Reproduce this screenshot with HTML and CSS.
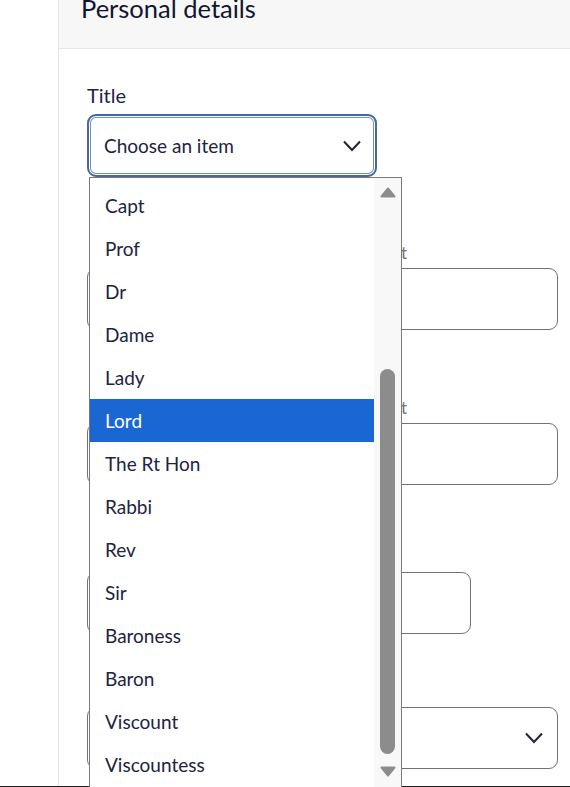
FILE: index.html
```html
<!DOCTYPE html>
<html lang="en">
<head>
<meta charset="utf-8">
<title>Personal details</title>
<link rel="stylesheet" href="styles.css">
</head>
<body>
<div class="page">
  <div class="gutter"></div>
  <section class="panel">
    <header class="panel-head">
      <h2 class="panel-title">Personal details</h2>
    </header>
    <div class="panel-body">
      <div class="field field-title">
        <label class="label">Title</label>
        <div class="select-wrap">
          <div class="select select-focused">
            <span class="select-value">Choose an item</span>
            <svg class="chev" width="18" height="12" viewBox="0 0 18 12"><path d="M1 1.5 L9 10 L17 1.5" fill="none" stroke="#1d2340" stroke-width="2"/></svg>
          </div>
          <div class="dropdown">
            <ul class="options">
              <li class="option">Capt</li>
              <li class="option">Prof</li>
              <li class="option">Dr</li>
              <li class="option">Dame</li>
              <li class="option">Lady</li>
              <li class="option option-active">Lord</li>
              <li class="option">The Rt Hon</li>
              <li class="option">Rabbi</li>
              <li class="option">Rev</li>
              <li class="option">Sir</li>
              <li class="option">Baroness</li>
              <li class="option">Baron</li>
              <li class="option">Viscount</li>
              <li class="option">Viscountess</li>
            </ul>
            <div class="scrollbar">
              <svg class="arrow arrow-up" width="16" height="11" viewBox="0 0 16 11"><polygon points="8,1.5 14.5,9.5 1.5,9.5" fill="#8c8c8c" stroke="#8c8c8c" stroke-width="2" stroke-linejoin="round"/></svg>
              <div class="thumb"></div>
              <svg class="arrow arrow-down" width="16" height="11" viewBox="0 0 16 11"><polygon points="1.5,1.5 14.5,1.5 8,9.5" fill="#8c8c8c" stroke="#8c8c8c" stroke-width="2" stroke-linejoin="round"/></svg>
            </div>
          </div>
        </div>
      </div>
      <div class="field field-2">
        <label class="label label-hint label-hint-long">First name(s) as shown on your passport</label>
        <div class="input"></div>
      </div>
      <div class="field field-3">
        <label class="label label-hint label-hint-long">Last name(s) as shown on your passport</label>
        <div class="input"></div>
      </div>
      <div class="field field-4">
        <label class="label label-hint">Date of birth</label>
        <div class="input input-short"></div>
      </div>
      <div class="field field-5">
        <label class="label label-hint">Nationality</label>
        <div class="select">
          <span class="select-value"></span>
          <svg class="chev" width="18" height="12" viewBox="0 0 18 12"><path d="M1 1.5 L9 10 L17 1.5" fill="none" stroke="#1d2340" stroke-width="2"/></svg>
        </div>
      </div>
    </div>
  </section>
</div>
</body>
</html>
```

FILE: styles.css
```css
* { box-sizing: border-box; }

html, body {
  margin: 0;
  padding: 0;
  background: #ffffff;
}

body {
  font-family: Lato, "Open Sans", "Liberation Sans", sans-serif;
  color: #1d2340;
  height: 787px;
  overflow: hidden;
}

.page {
  display: flex;
  height: 787px;
  border-bottom: 1px solid #1f1f1f;
}

.gutter {
  width: 58px;
  flex: none;
}

.panel {
  flex: 1;
  border-left: 1px solid #e4e4e4;
  display: flex;
  flex-direction: column;
  min-width: 0;
}

.panel-head {
  height: 49px;
  background: #f7f7f7;
  border-bottom: 1px solid #e6e6e6;
  padding-left: 22px;
  overflow: hidden;
  flex: none;
}

.panel-title {
  margin: -8px 0 0 0;
  font-size: 25.5px;
  line-height: 32px;
  font-weight: 400;
  color: #111530;
}

.panel-body {
  padding: 34px 12px 0 28px;
  display: flex;
  flex-direction: column;
}

.field {
  display: flex;
  flex-direction: column;
}

.label {
  font-size: 20px;
  line-height: 24px;
  margin-bottom: 7px;
  color: #1d2340;
}

.label-hint {
  font-size: 17px;
  line-height: 22px;
  margin-bottom: 4px;
  padding-left: 3px;
  color: #6e7282;
  white-space: nowrap;
}

.label-hint-long {
  width: 320px;
  padding-left: 0;
  text-align: right;
  overflow: hidden;
}

.field-2 { margin-top: 65px; }
.field-3 { margin-top: 67px; }
.field-4 { margin-top: 61px; }
.field-5 { margin-top: 47px; }

.select-wrap {
  position: relative;
  width: 290px;
}

.select {
  height: 62px;
  border: 1px solid #6e7180;
  border-radius: 9px;
  display: flex;
  align-items: center;
  justify-content: space-between;
  padding: 0 14px 0 16px;
  background: #fff;
}

.select-focused {
  height: 63px;
  border: 2px solid #46699b;
  box-shadow: inset 0 0 0 1px #ffffff, inset 0 0 0 2px #7391bd;
  padding: 0 14px 0 15px;
}

.select-value {
  font-size: 19px;
  color: #1d2340;
}

.chev { display: block; }

.input {
  height: 62px;
  border: 1px solid #6e7180;
  border-radius: 9px;
  background: #fff;
}

.input-short {
  width: 384px;
}

.dropdown {
  position: absolute;
  top: 100%;
  left: 2px;
  width: 313px;
  height: 640px;
  border: 1px solid #7a7a7a;
  background: #ffffff;
  display: flex;
  z-index: 5;
}

.options {
  list-style: none;
  margin: 0;
  padding: 6px 0 0 0;
  width: 284px;
  flex: none;
}

.option {
  height: 43px;
  line-height: 44px;
  padding-left: 15px;
  font-size: 19px;
  color: #1d2340;
}

.option-active {
  background: #1a66d2;
  color: #ffffff;
}

.scrollbar {
  flex: 1;
  background: #f8f8f8;
  display: flex;
  flex-direction: column;
  align-items: center;
}

.arrow { display: block; flex: none; }

.arrow-up { margin-top: 9px; }

.thumb {
  margin-top: 171px;
  width: 15px;
  height: 385px;
  border-radius: 8px;
  background: #8c8c8c;
  flex: none;
}

.arrow-down { margin-top: 12px; }
```
